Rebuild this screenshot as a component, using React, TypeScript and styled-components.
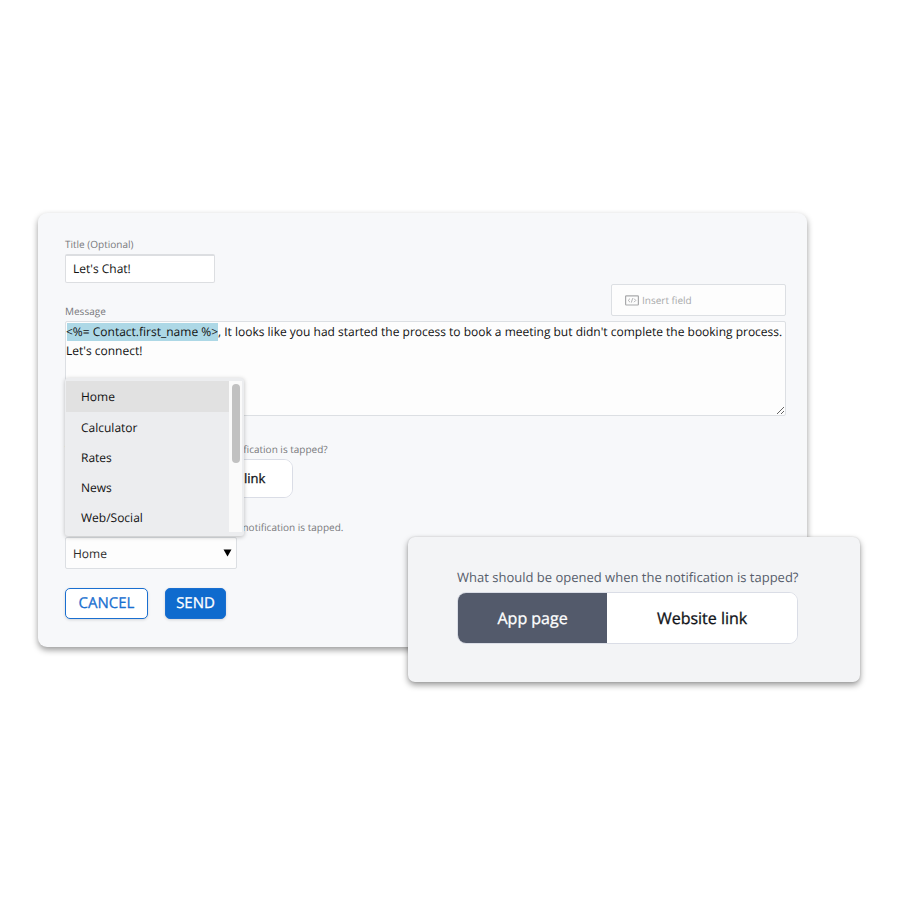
import React, { useState } from "react";
import styled, { createGlobalStyle } from "styled-components";

const GlobalStyle = createGlobalStyle`
  *, *::before, *::after { box-sizing: border-box; }
  body {
    margin: 0;
    background: #ffffff;
    font-family: "Open Sans", "Noto Sans", sans-serif;
    font-size: 12px;
    color: #111111;
    text-rendering: geometricPrecision;
  }
  button, input, textarea, select {
    font-family: inherit;
    margin: 0;
    text-rendering: inherit;
  }
`;

const Page = styled.main`
  padding: 213px 40px 80px 38px;
`;

const Stage = styled.div`
  position: relative;
  padding-right: 53px;
`;

const Panel = styled.form`
  display: flex;
  flex-direction: column;
  align-items: flex-start;
  padding: 23px 21px 28px 27px;
  background: #f7f8fa;
  border-radius: 9px;
  box-shadow: 0 3px 6px rgba(0, 0, 0, 0.4);
`;

const Caption = styled.label`
  display: block;
  font-size: 10px;
  line-height: 16px;
  padding-bottom: 2px;
  color: #77797c;
  white-space: nowrap;
`;

const Question = styled.p<{ $large?: boolean }>`
  margin: 0;
  font-size: ${(p) => (p.$large ? 13 : 10)}px;
  line-height: ${(p) => (p.$large ? 20 : 16)}px;
  padding-bottom: ${(p) => (p.$large ? 5 : 2)}px;
  color: ${(p) => (p.$large ? "#565d6b" : "#77797c")};
  white-space: nowrap;
`;

const TitleInput = styled.input`
  width: 150px;
  height: 29px;
  padding: 0 7px 2px;
  border: 1px solid #dcdee1;
  border-top: 2px solid #dcdee1;
  border-radius: 2px;
  background: #ffffff;
  font-size: 12px;
  color: #111111;
`;

const MessageHeader = styled.div`
  display: flex;
  align-self: stretch;
  align-items: flex-end;
  justify-content: space-between;
  margin-top: 1px;
`;

const InsertButton = styled.button`
  display: flex;
  align-items: center;
  gap: 3px;
  width: 175px;
  height: 32px;
  margin-bottom: 5px;
  padding: 0 13px;
  border: 1px solid #dcdfe3;
  border-radius: 2px;
  background: #fdfdfd;
  font-size: 10px;
  color: #a8a9ab;
`;

const MessageBox = styled.textarea`
  display: block;
  align-self: stretch;
  height: 95px;
  padding: 0;
  border: 1px solid #dcdfe3;
  border-radius: 2px;
  background: linear-gradient(#add8e6, #add8e6) 1px 1px / 151px 18px no-repeat,
    #fdfdfd;
  font-size: 12px;
  line-height: 19px;
  color: #111111;
  resize: vertical;
`;

const Section = styled.div<{ $gap: number }>`
  position: relative;
  margin-top: ${(p) => p.$gap}px;
`;

const Segments = styled.div<{ $large?: boolean }>`
  display: flex;
  width: ${(p) => (p.$large ? "341px" : "228px")};
  height: ${(p) => (p.$large ? 52 : 39)}px;
  border: 1px solid #dadde6;
  border-radius: 9px;
  background: #ffffff;
  overflow: hidden;
`;

const Segment = styled.button<{ $active: boolean; $large?: boolean }>`
  flex: ${(p) => (p.$active ? "0 0 44%" : "1")};
  padding: 0 0 1px;
  border: 0;
  background: ${(p) => (p.$active ? "#535a6b" : "#ffffff")};
  color: ${(p) => (p.$active ? "#ffffff" : "#111318")};
  font-size: ${(p) => (p.$large ? 16 : 13)}px;
  font-weight: 500;
  -webkit-text-stroke: 0.3px currentColor;
`;

const SelectWrap = styled.div`
  position: relative;
  width: 172px;
`;

const PageSelect = styled.select`
  display: block;
  width: 100%;
  height: 32px;
  padding: 0 24px 0 7px;
  border: 1px solid #dcdfe3;
  border-radius: 2px;
  background: #fdfdfd;
  appearance: none;
  font-size: 12px;
  color: #2b2b2b;
`;

const SelectArrow = styled.svg`
  position: absolute;
  right: 5px;
  top: 12px;
  pointer-events: none;
`;

const Menu = styled.div`
  position: absolute;
  left: 0;
  bottom: 33px;
  display: flex;
  width: 179px;
  padding: 3px 2px 4px 1px;
  background: #ecedef;
  border-radius: 3px;
  box-shadow: 0 1px 4px rgba(0, 0, 0, 0.25);
`;

const MenuList = styled.ul`
  flex: 1;
  margin: 0;
  padding: 0;
  list-style: none;
`;

const MenuItem = styled.li<{ $selected: boolean }>`
  height: ${(p) => (p.$selected ? 31 : 30)}px;
  padding-left: 15px;
  line-height: 31px;
  font-size: 12px;
  background: ${(p) => (p.$selected ? "#e1e1e1" : "transparent")};
`;

const MenuTrack = styled.div`
  width: 13px;
  padding: 3px 2px 3px 3px;
  background: #fafafa;
`;

const MenuThumb = styled.div`
  width: 8px;
  height: 79px;
  border-radius: 4px;
  background: #c1c1c1;
`;

const Actions = styled.div`
  display: flex;
  gap: 17px;
  margin-top: 19px;
`;

const ActionButton = styled.button<{ $primary?: boolean }>`
  width: ${(p) => (p.$primary ? 61 : 83)}px;
  height: 31px;
  padding: 0 0 1px;
  border: 1px solid #1a6fd0;
  border-radius: 5px;
  background: ${(p) => (p.$primary ? "#0f6bce" : "#ffffff")};
  color: ${(p) => (p.$primary ? "#ffffff" : "#1a6fd0")};
  font-size: 15px;
  font-weight: 500;
  -webkit-text-stroke: 0.3px currentColor;
  box-shadow: 0 1px 3px rgba(0, 0, 0, 0.15);
`;

const Callout = styled.section`
  position: absolute;
  right: 0;
  bottom: -35px;
  width: 452px;
  padding: 30px 49px 38px;
  background: #f3f4f6;
  border-radius: 7px;
  box-shadow: 0 3px 6px rgba(0, 0, 0, 0.4), 0 0 2px rgba(0, 0, 0, 0.15);
`;

const pages = ["Home", "Calculator", "Rates", "News", "Web/Social"];

const CodeIcon = () => (
  <svg width="14" height="11" viewBox="0 0 14 11" fill="none" stroke="#a8a9ab" aria-hidden="true">
    <rect x="0.6" y="0.8" width="12.8" height="9.2" rx="0.8" strokeWidth="1.2" />
    <path d="M5 3.6 3.2 5.4 5 7.2M9 3.6l1.8 1.8L9 7.2M7.7 3.2 6.3 7.6" strokeWidth="0.9" />
  </svg>
);

type ToggleProps = {
  large?: boolean;
  value: string;
  onChange: (value: string) => void;
};

const TargetToggle = ({ large, value, onChange }: ToggleProps) => (
  <Segments $large={large} role="group" aria-label="Notification target">
    {["App page", "Website link"].map((name) => (
      <Segment
        key={name}
        type="button"
        $large={large}
        $active={value === name}
        aria-pressed={value === name}
        onClick={() => onChange(name)}
      >
        {name}
      </Segment>
    ))}
  </Segments>
);

export default function App() {
  const [target, setTarget] = useState("App page");
  const [page, setPage] = useState("Home");

  return (
    <>
      <GlobalStyle />
      <Page>
        <Stage>
          <Panel onSubmit={(e) => e.preventDefault()}>
            <Caption htmlFor="title">Title (Optional)</Caption>
            <TitleInput id="title" defaultValue="Let's Chat!" />

            <MessageHeader>
              <Caption htmlFor="message">Message</Caption>
              <InsertButton type="button">
                <CodeIcon />
                Insert field
              </InsertButton>
            </MessageHeader>
            <MessageBox
              id="message"
              spellCheck={false}
              defaultValue={
                "<%= Contact.first_name %>, It looks like you had started the process to book a meeting but didn't complete the booking process. Let's connect!"
              }
            />

            <Section $gap={25}>
              <Question>What should be opened when the notification is tapped?</Question>
              <TargetToggle value={target} onChange={setTarget} />
            </Section>

            <Section $gap={21}>
              <Caption htmlFor="page">Choose which page to open when the notification is tapped.</Caption>
              <SelectWrap>
                <PageSelect id="page" value={page} onChange={(e) => setPage(e.target.value)}>
                  {pages.map((name) => (
                    <option key={name}>{name}</option>
                  ))}
                </PageSelect>
                <SelectArrow width="9" height="8" viewBox="0 0 9 8" aria-hidden="true">
                  <path d="M0.5 0.5h8L4.5 7.5z" fill="#000000" />
                </SelectArrow>
                <Menu>
                  <MenuList role="listbox" aria-label="Pages">
                    {pages.map((name) => (
                      <MenuItem
                        key={name}
                        role="option"
                        aria-selected={name === page}
                        $selected={name === page}
                        onClick={() => setPage(name)}
                      >
                        {name}
                      </MenuItem>
                    ))}
                  </MenuList>
                  <MenuTrack>
                    <MenuThumb />
                  </MenuTrack>
                </Menu>
              </SelectWrap>
            </Section>

            <Actions>
              <ActionButton type="button">CANCEL</ActionButton>
              <ActionButton type="submit" $primary>
                SEND
              </ActionButton>
            </Actions>
          </Panel>

          <Callout>
            <Question $large>What should be opened when the notification is tapped?</Question>
            <TargetToggle large value={target} onChange={setTarget} />
          </Callout>
        </Stage>
      </Page>
    </>
  );
}
